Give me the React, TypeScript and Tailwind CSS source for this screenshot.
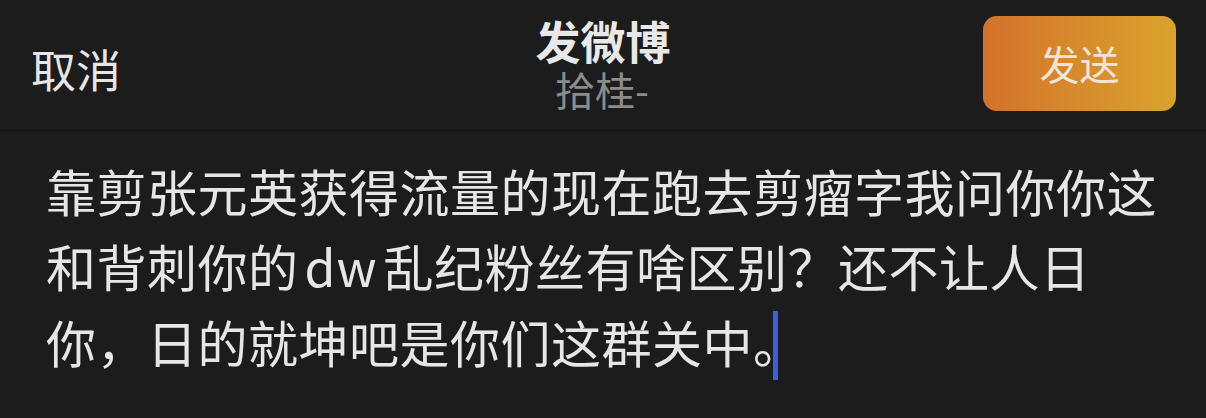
const cjk = "font-['Noto_Sans_CJK_SC','Noto_Sans',sans-serif]";

export default function App() {
  return (
    <div className={`w-[1206px] h-[418px] bg-[#1c1c1c] overflow-hidden ${cjk}`}>
      <header className="relative flex h-[131px] items-center justify-between border-b border-[#131313] pl-[31px] pr-[30px]">
        <button className="text-[45px] leading-none text-[#e6e6e6] mt-[6px]">取消</button>
        <div className="absolute left-1/2 top-[14px] -translate-x-1/2 flex flex-col items-center">
          <span className="text-[45px] font-bold leading-[54px] text-[#e8e8e8]">发微博</span>
          <span className="text-[40px] leading-[42px] text-[#8c8c8c] ml-[-2px]">拾桂-</span>
        </div>
        <button className="flex h-[95px] w-[193px] items-center justify-center rounded-[14px] bg-gradient-to-r from-[#d3722b] to-[#d9a32c] text-[40px] text-[#f0e4da] mt-[-4px]">
          发送
        </button>
      </header>
      <div className="pl-[46px] pt-[22px] text-[50px] leading-[75px] tracking-[0.5px] text-[#e6e6e6]">
        <div className="whitespace-nowrap">靠剪张元英获得流量的现在跑去剪瘤字我问你你这</div>
        <div className="whitespace-nowrap">
          和背刺你的<span className="mx-[6px] tracking-[1px]">dw</span>乱纪粉丝有啥区别？还不让人日
        </div>
        <div className="flex items-center whitespace-nowrap">
          <span>你，日的就坤吧是你们这群关中。</span>
          <span className="ml-[-31px] mt-[8px] inline-block h-[69px] w-[5px] bg-[#3a5fe0]" />
        </div>
      </div>
    </div>
  );
}
